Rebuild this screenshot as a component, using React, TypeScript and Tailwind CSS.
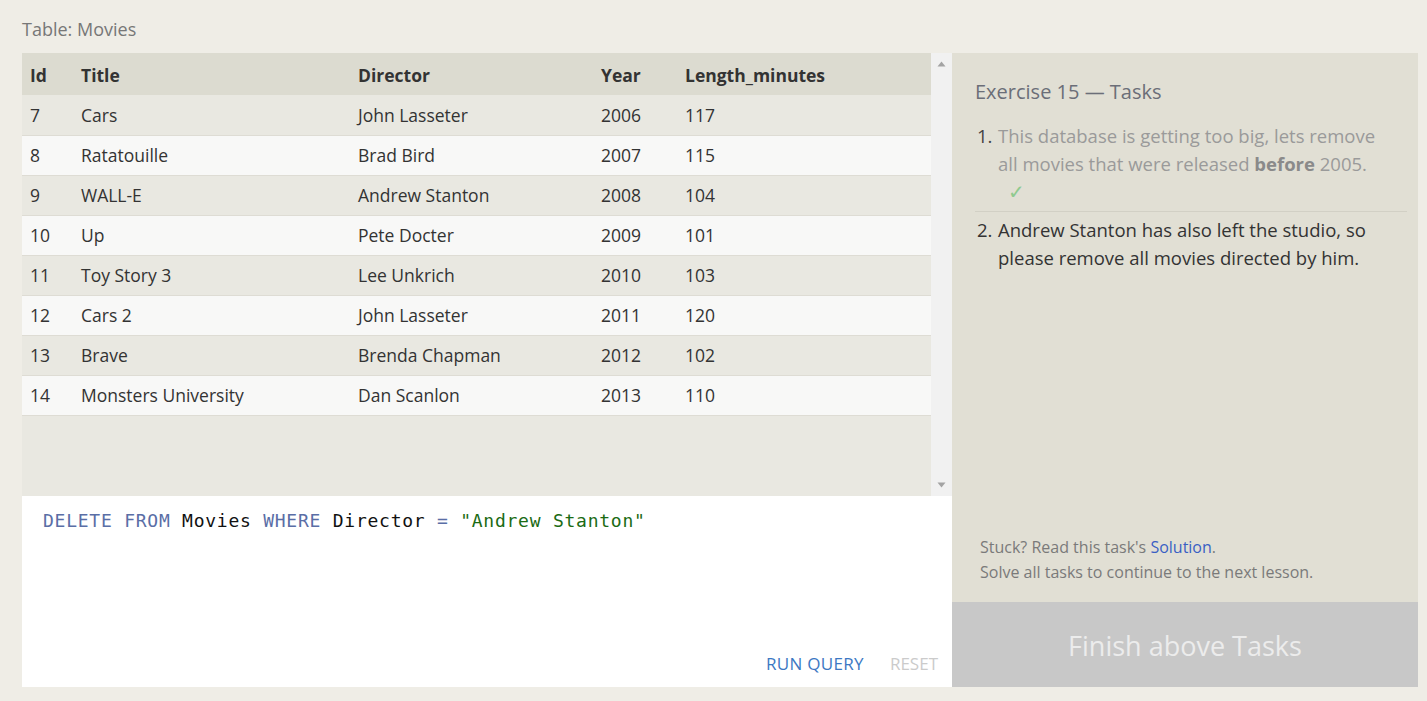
import React from 'react';

const rows = [
  { id: 7, title: 'Cars', director: 'John Lasseter', year: 2006, length: 117 },
  { id: 8, title: 'Ratatouille', director: 'Brad Bird', year: 2007, length: 115 },
  { id: 9, title: 'WALL-E', director: 'Andrew Stanton', year: 2008, length: 104 },
  { id: 10, title: 'Up', director: 'Pete Docter', year: 2009, length: 101 },
  { id: 11, title: 'Toy Story 3', director: 'Lee Unkrich', year: 2010, length: 103 },
  { id: 12, title: 'Cars 2', director: 'John Lasseter', year: 2011, length: 120 },
  { id: 13, title: 'Brave', director: 'Brenda Chapman', year: 2012, length: 102 },
  { id: 14, title: 'Monsters University', director: 'Dan Scanlon', year: 2013, length: 110 },
];

const ResultTable: React.FC = () => {
  return (
    <div className="flex h-[443px] bg-[#e9e8e1]">
      <div className="w-[909px]">
        <table className="w-full border-collapse text-left text-[17.5px] text-[#333]">
          <thead>
            <tr className="h-[42px] bg-[#dcdbd0]">
              <th className="w-[59px] pl-[8px] pt-[2px] font-bold">Id</th>
              <th className="w-[277px] pt-[2px] font-bold">Title</th>
              <th className="w-[243px] pt-[2px] font-bold">Director</th>
              <th className="w-[84px] pt-[2px] font-bold">Year</th>
              <th className="pt-[2px] font-bold">Length_minutes</th>
            </tr>
          </thead>
          <tbody>
            {rows.map((r, i) => (
              <tr
                key={r.id}
                className={
                  i % 2 === 0
                    ? 'h-[40px] border-b border-[#dedcd4] bg-[#e9e8e1]'
                    : 'h-[40px] border-b border-[#dedcd4] bg-[#f8f8f7]'
                }
              >
                <td className="pl-[8px] pt-[1px]">{r.id}</td>
                <td className="pt-[1px]">{r.title}</td>
                <td className="pt-[1px]">{r.director}</td>
                <td className="pt-[1px]">{r.year}</td>
                <td className="pt-[1px]">{r.length}</td>
              </tr>
            ))}
          </tbody>
        </table>
      </div>
      <div className="flex w-[21px] flex-col items-center justify-between bg-[#f1f1f1] py-[8px]">
        <svg width="9" height="6" viewBox="0 0 9 6">
          <path d="M4.5 0.5L8.5 5.5H0.5Z" fill="#a3a3a3" />
        </svg>
        <svg width="9" height="6" viewBox="0 0 9 6">
          <path d="M0.5 0.5H8.5L4.5 5.5Z" fill="#a3a3a3" />
        </svg>
      </div>
    </div>
  );
};

const Editor: React.FC = () => {
  return (
    <div className="flex h-[191px] flex-col justify-between bg-white">
      <div className="pl-[21px] pt-[11px] font-['DejaVu_Sans_Mono',monospace] text-[18px] tracking-[0.75px] text-[#111]">
        <span className="text-[#5a6ea6]">DELETE</span> <span className="text-[#5a6ea6]">FROM</span> Movies{' '}
        <span className="text-[#5a6ea6]">WHERE</span> Director <span className="text-[#5a6ea6]">=</span>{' '}
        <span className="text-[#1b6b14]">"Andrew Stanton"</span>
      </div>
      <div className="flex justify-end gap-[26px] pb-[11px] pr-[14px] text-[17px]">
        <button className="tracking-[0.3px] text-[#3c78c3]">RUN QUERY</button>
        <button className="text-[#cbcbcb]">RESET</button>
      </div>
    </div>
  );
};

const TaskPanel: React.FC = () => {
  return (
    <div className="flex w-[466px] flex-col bg-[#e1dfd4]">
      <div className="flex-1 pl-[23px] pr-[11px] pt-[24px]">
        <h2 className="text-[20px] text-[#6b6e78]">Exercise 15 — Tasks</h2>
        <ol className="mt-[15px] text-[18.5px] leading-[28px]">
          <li className="flex border-b border-[#d2d0c5] pb-[5px]">
            <span className="w-[23px] shrink-0 pl-[2px] text-[#444]">1.</span>
            <div className="pr-[16px] text-[#9a9a9a]">
              This database is getting too big, lets remove all movies that were released{' '}
              <b className="font-bold text-[#8a8a8a]">before</b> 2005.
              <div className="pl-[10px] text-[20px] text-[#8fca8f]">✓</div>
            </div>
          </li>
          <li className="flex pt-[4px] text-[#333]">
            <span className="w-[23px] shrink-0 pl-[2px]">2.</span>
            <div className="pr-[16px]">Andrew Stanton has also left the studio, so please remove all movies directed by him.</div>
          </li>
        </ol>
      </div>
      <div className="pb-[17px] pl-[28px] text-[16px] leading-[25px] text-[#7a7a7a]">
        <div>
          Stuck? Read this task's <span className="text-[#3a5fc4]">Solution</span>.
        </div>
        <div>Solve all tasks to continue to the next lesson.</div>
      </div>
      <div className="flex h-[85px] items-center justify-center bg-[#c8c8c8] pt-[4px] text-[27px] text-[#ececec]">
        Finish above Tasks
      </div>
    </div>
  );
};

export default function App() {
  return (
    <div className="h-[701px] w-full bg-[#efede6] px-[22px] pt-[17px] font-['Open_Sans',sans-serif]">
      <div className="text-[18px] leading-[24px] text-[#777]">Table: Movies</div>
      <div className="mt-[12px] flex h-[634px] w-[1396px]">
        <div className="flex w-[930px] flex-col">
          <ResultTable />
          <Editor />
        </div>
        <TaskPanel />
      </div>
    </div>
  );
}
